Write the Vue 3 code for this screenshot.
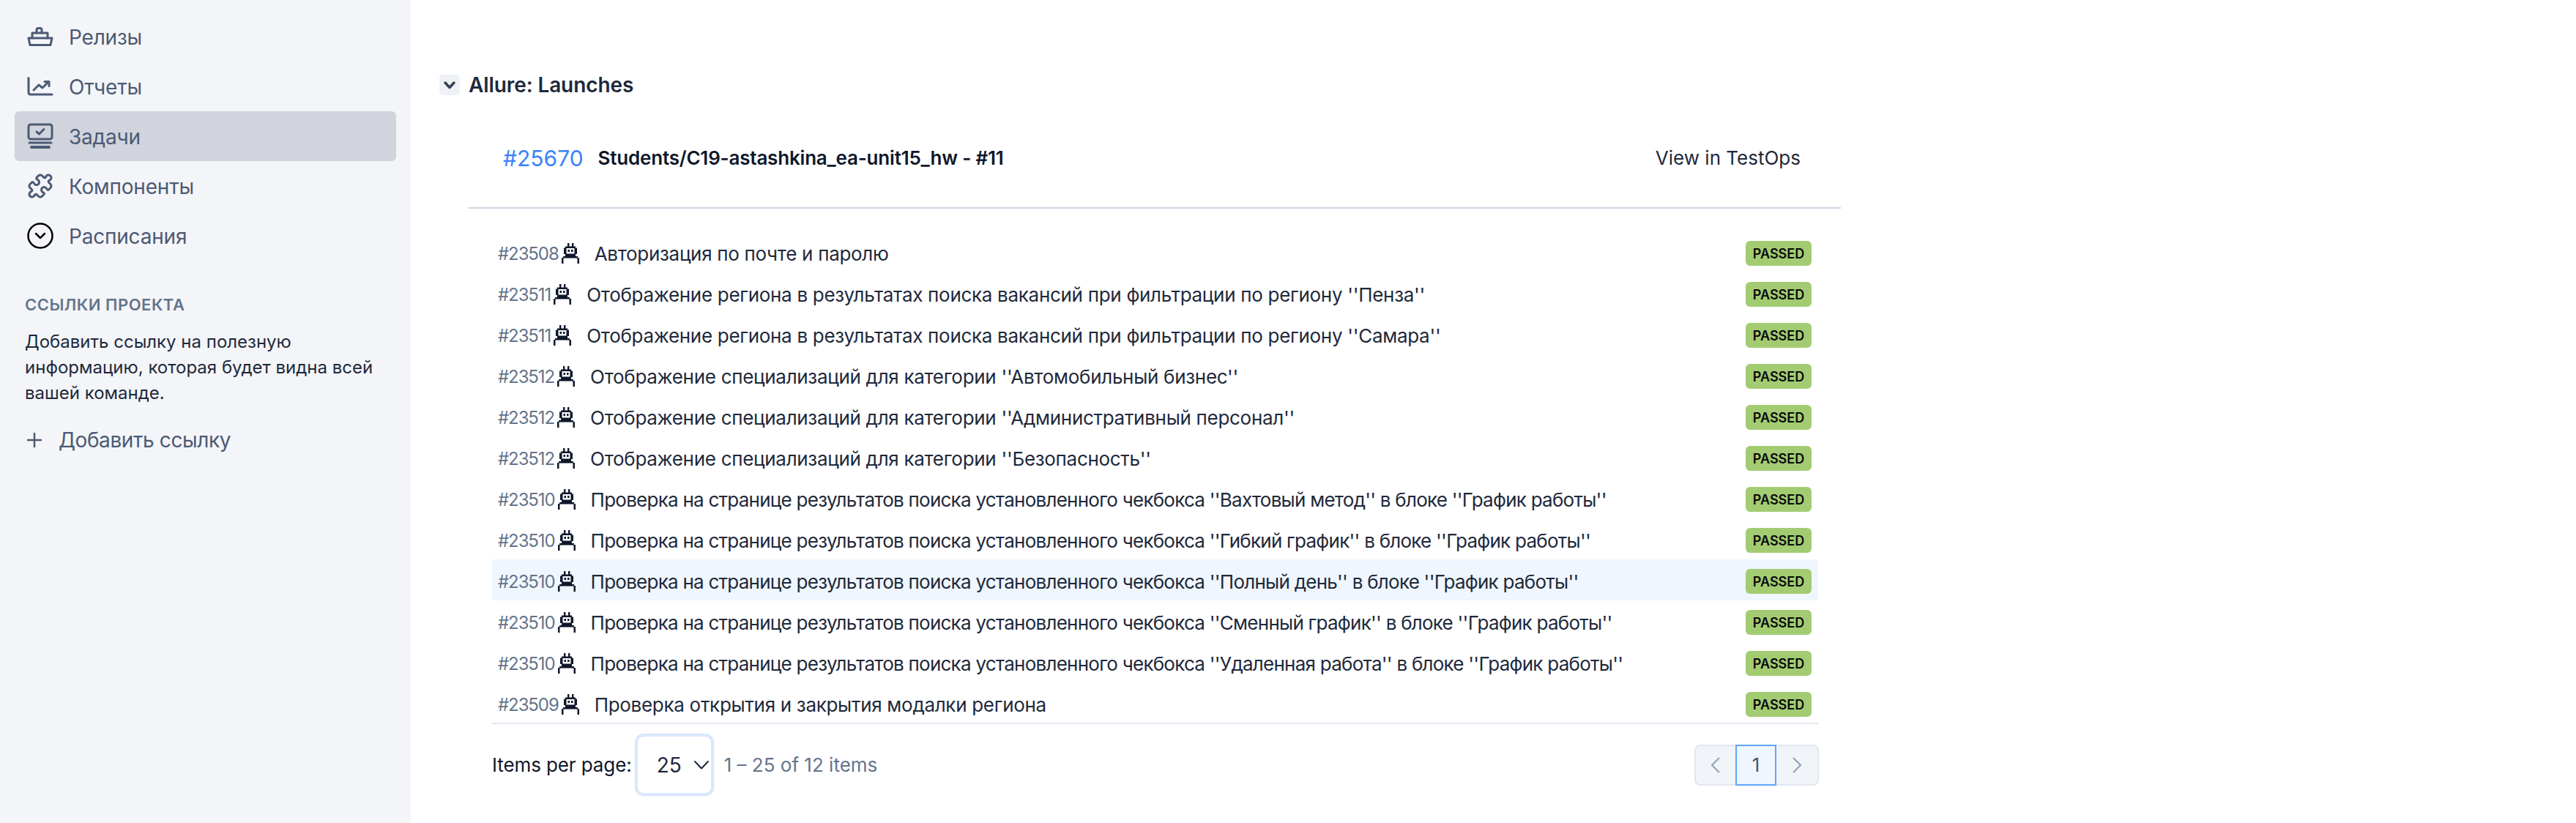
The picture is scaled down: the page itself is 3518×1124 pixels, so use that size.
<script setup>
const base1 = 'Отображение региона в результатах поиска вакансий при фильтрации по региону '
const base2 = 'Отображение специализаций для категории '
const p = (n) => `Проверка на странице результатов поиска установленного чекбокса ''${n}'' в блоке ''График работы''`
const rows = [
  { id: 23508, name: 'Авторизация по почте и паролю' },
  { id: 23511, name: base1 + "''Пенза''" },
  { id: 23511, name: base1 + "''Самара''" },
  { id: 23512, name: base2 + "''Автомобильный бизнес''" },
  { id: 23512, name: base2 + "''Административный персонал''" },
  { id: 23512, name: base2 + "''Безопасность''" },
  { id: 23510, name: p('Вахтовый метод'), tight: true },
  { id: 23510, name: p('Гибкий график'), tight: true },
  { id: 23510, name: p('Полный день'), tight: true, hover: true },
  { id: 23510, name: p('Сменный график'), tight: true },
  { id: 23510, name: p('Удаленная работа'), tight: true },
  { id: 23509, name: 'Проверка открытия и закрытия модалки региона' },
]
</script>

<template>
  <div class="page">
    <aside class="sidebar">
      <nav class="nav">
        <a class="nav-item">
          <svg class="nav-icon" viewBox="0 0 36 26" fill="none" stroke="#4c5a75" stroke-width="3" stroke-linejoin="round" stroke-linecap="round">
            <path d="M2 15H34L32 24.5H4Z" />
            <path d="M7 15V8H28V15" />
            <path d="M13 8V4Q13 1.5 15.5 1.5H17.500Q20 1.500 20 4V8" />
          </svg>
          <span>Релизы</span>
        </a>
        <a class="nav-item">
          <svg class="nav-icon" viewBox="0 0 36 26" fill="none" stroke="#4c5a75" stroke-width="3" stroke-linejoin="round" stroke-linecap="round">
            <path d="M2 1.500V21Q2 24 5 24H34" />
            <path d="M9 18L16 11L21 15L29 7" />
            <path d="M24 6.500H30V12.500" />
          </svg>
          <span>Отчеты</span>
        </a>
        <a class="nav-item active">
          <svg class="nav-icon tall" viewBox="0 0 36 36" fill="none" stroke="#4c5a75" stroke-width="3" stroke-linejoin="round" stroke-linecap="round">
            <rect x="2" y="2" width="32" height="20" rx="3" />
            <path d="M13 12L16.500 15L23 8.500" />
            <path d="M3 27H33" />
            <path d="M6 33H30" stroke-width="4" />
          </svg>
          <span>Задачи</span>
        </a>
        <a class="nav-item">
          <svg class="nav-icon tall" viewBox="0 0 24 24" fill="none" stroke="#4c5a75" stroke-width="2" stroke-linejoin="round" stroke-linecap="round">
            <path d="M19.439 7.85c-.049.322.059.648.289.878l1.568 1.568c.47.47.706 1.087.706 1.704s-.235 1.233-.706 1.704l-1.611 1.611a.98.98 0 0 1-.837.276c-.47-.07-.802-.48-.968-.925a2.501 2.501 0 1 0-3.214 3.214c.446.166.855.497.925.968a.979.979 0 0 1-.276.837l-1.61 1.61a2.404 2.404 0 0 1-1.705.707 2.402 2.402 0 0 1-1.704-.706l-1.568-1.568a1.026 1.026 0 0 0-.877-.29c-.493.074-.84.504-1.02.968a2.5 2.5 0 1 1-3.237-3.237c.464-.18.894-.527.967-1.02a1.026 1.026 0 0 0-.289-.877l-1.568-1.568A2.402 2.402 0 0 1 1.998 12c0-.617.236-1.234.706-1.704L4.23 8.77c.24-.24.581-.353.917-.303.515.077.877.528 1.073 1.01a2.5 2.5 0 1 0 3.259-3.259c-.482-.196-.933-.558-1.01-1.073-.05-.336.062-.676.303-.917l1.525-1.525A2.402 2.402 0 0 1 12 1.998c.617 0 1.234.236 1.704.706l1.568 1.568c.23.23.556.338.877.29.493-.074.84-.504 1.02-.968a2.5 2.5 0 1 1 3.237 3.237c-.464.18-.894.527-.967 1.02Z" />
          </svg>
          <span>Компоненты</span>
        </a>
        <a class="nav-item">
          <svg class="nav-icon tall" viewBox="0 0 36 36" fill="none" stroke="#000" stroke-width="2.500" stroke-linejoin="round" stroke-linecap="round">
            <circle cx="18" cy="18" r="16.500" />
            <path d="M12 15L18 21L24 15" />
          </svg>
          <span>Расписания</span>
        </a>
      </nav>
      <h4 class="links-title">Ссылки проекта</h4>
      <p class="links-text">Добавить ссылку на полезную информацию, которая будет видна всей вашей команде.</p>
      <a class="add-link">
        <svg class="plus" viewBox="0 0 22 22" fill="none" stroke="#4c5a75" stroke-width="2.500">
          <path d="M11 1V21M1 11H21" />
        </svg>
        <span>Добавить ссылку</span>
      </a>
    </aside>

    <main class="main">
      <div class="heading">
        <span class="collapse">
          <svg viewBox="0 0 28 28" fill="none" stroke="#334155" stroke-width="3.500" stroke-linecap="round" stroke-linejoin="round">
            <path d="M8 11L14 17.500L20 11" />
          </svg>
        </span>
        <h3>Allure: Launches</h3>
      </div>

      <section class="panel">
        <header class="launch">
          <span class="launch-id">#25670</span>
          <span class="launch-name">Students/C19-astashkina_ea-unit15_hw - #11</span>
          <span class="testops">View in TestOps</span>
        </header>

        <div class="list">
          <div v-for="(r, i) in rows" :key="i" class="row" :class="{ hover: r.hover }">
            <span class="tid">#{{ r.id }}</span>
            <svg class="robot" viewBox="0 0 24 28" fill="#0f172a">
              <path d="M8 0h2.400v5H8zM14 0h2.400v5H14z" />
              <path fill-rule="evenodd" d="M5 4.500h14v2h2V15h-2v3H5v-3H3V6.500h2zM6.500 7v7.500h11V7z" />
              <path d="M8.500 9h2.500v3H8.500zM13 9h2.500v3H13z" />
              <path d="M2 18h20v2h2v8h-2.500v-7.500h-19V28H0v-8h2z" />
            </svg>
            <span class="tname" :class="{ tight: r.tight }">{{ r.name }}</span>
            <span class="badge">PASSED</span>
          </div>
        </div>

        <footer class="pager">
          <span class="per-label">Items per page:</span>
          <span class="select">
            <span>25</span>
            <svg viewBox="0 0 20 20" fill="none" stroke="#1e293b" stroke-width="2" stroke-linecap="round" stroke-linejoin="round">
              <path d="M1 5L10 14.500L19 5" />
            </svg>
          </span>
          <span class="range">1 – 25 of 12 items</span>
          <div class="pages">
            <span class="pg">
              <svg viewBox="0 0 14 22" fill="none" stroke="#94a3b8" stroke-width="2.200"><path d="M12 1L2 11L12 21" /></svg>
            </span>
            <span class="pg current">1</span>
            <span class="pg">
              <svg viewBox="0 0 14 22" fill="none" stroke="#94a3b8" stroke-width="2.200"><path d="M2 1L12 11L2 21" /></svg>
            </span>
          </div>
        </footer>
      </section>
    </main>
  </div>
</template>

<style>
html, body { margin: 0; background: #fff; }
</style>

<style scoped>
.page {
  display: flex;
  height: 1124px;
  overflow: hidden;
  font-family: Inter, "Noto Sans", sans-serif;
  color: #0f172a;
}
.sidebar {
  width: 561px;
  flex: none;
  box-sizing: border-box;
  background: #f3f5f8;
  padding: 16px 20px 0;
}
.nav { display: flex; flex-direction: column; }
.nav-item {
  height: 68px;
  display: flex;
  align-items: center;
  gap: 21px;
  padding-left: 16px;
  border-radius: 6px;
  color: #4c5a75;
  font-size: 28px;
  letter-spacing: -0.2px;
}
.nav-item span { padding-top: 2px; }
.nav-item.active { background: #d1d4dd; }
.nav-icon { width: 36px; height: 26px; flex: none; margin-left: 1px; }
.nav-icon.tall { height: 36px; }
.links-title {
  margin: 45px 0 0 14px;
  font-size: 22px;
  line-height: 30px;
  font-weight: 600;
  text-transform: uppercase;
  letter-spacing: 0.5px;
  color: #64748b;
}
.links-text {
  margin: 18px 0 0 14px;
  width: 500px;
  font-size: 24px;
  line-height: 35px;
  color: #1e293b;
}
.add-link {
  display: flex;
  align-items: center;
  gap: 22px;
  margin: 26px 0 0 16px;
  height: 42px;
  color: #4c5a75;
  font-size: 28px;
  letter-spacing: -0.4px;
}
.plus { width: 22px; height: 22px; flex: none; }

.main { flex: 1; padding: 102px 0 0 39px; min-width: 0; }
.heading { display: flex; align-items: center; gap: 12px; height: 28px; }
.collapse { width: 28px; height: 28px; border-radius: 5px; background: #eef1f5; display: block; }
.collapse svg { width: 28px; height: 28px; display: block; }
.heading h3 { margin: 0; font-size: 28px; font-weight: 600; color: #1e293b; letter-spacing: -0.1px; }

.panel { width: 1874px; margin-left: 40px; }
.launch {
  display: flex;
  align-items: center;
  height: 135px;
  padding: 18px 55px 0 47px;
  border-bottom: 2px solid #cbd5e1;
}
.launch-id { font-size: 30px; color: #3b82f6; }
.launch-name { margin-left: 20px; font-size: 26px; font-weight: 600; color: #0f172a; letter-spacing: -0.2px; }
.testops { margin-left: auto; font-size: 26px; color: #1e293b; }

.list { margin: 31px 31px 0 32px; display: flex; flex-direction: column; }
.row {
  height: 56px;
  box-sizing: border-box;
  display: flex;
  align-items: center;
  padding: 4px 9px 0 8px;
}
.row.hover { background: #eff6fd; }
.tid { font-size: 24px; color: #64748b; letter-spacing: -1.1px; }
.robot { width: 24px; height: 28px; flex: none; margin-left: 4px; }
.tname { margin-left: 21px; font-size: 26px; color: #1e293b; white-space: nowrap; letter-spacing: -0.3px; }
.tname.tight { letter-spacing: -0.75px; }
.badge {
  margin-left: auto;
  width: 90px;
  height: 34px;
  border-radius: 6px;
  background: #a3cc72;
  color: #0a0a0a;
  font-size: 18px;
  font-weight: 600;
  display: flex;
  align-items: center;
  justify-content: center;
}

.pager {
  margin: -1px 30px 0 32px;
  border-top: 2px solid #e2e8f0;
  height: 111px;
  display: flex;
  align-items: center;
}
.per-label { font-size: 26px; color: #0f172a; letter-spacing: -0.1px; }
.select {
  margin-left: 4px;
  width: 108px;
  height: 85px;
  box-sizing: border-box;
  border: 4px solid #dbe7fb;
  border-radius: 12px;
  box-shadow: 0 0 2px #dbe7fb;
  display: flex;
  align-items: center;
  padding-left: 26px;
  gap: 17px;
  font-size: 28px;
  color: #1e293b;
}
.select svg { width: 20px; height: 20px; flex: none; }
.range { margin-left: 14px; font-size: 26px; color: #64748b; }
.pages { margin-left: auto; display: flex; height: 56px; }
.pg {
  width: 56px;
  box-sizing: border-box;
  background: #f1f5f9;
  border: 2px solid #e2e8f0;
  display: flex;
  align-items: center;
  justify-content: center;
  font-size: 26px;
  color: #475569;
}
.pg:first-child { border-radius: 8px 0 0 8px; border-right: 0; }
.pg:last-child { width: 58px; border-radius: 0 8px 8px 0; border-left: 0; }
.pg svg { width: 14px; height: 22px; }
.pg.current { background: #eff6ff; border-color: #60a5fa; }
</style>
